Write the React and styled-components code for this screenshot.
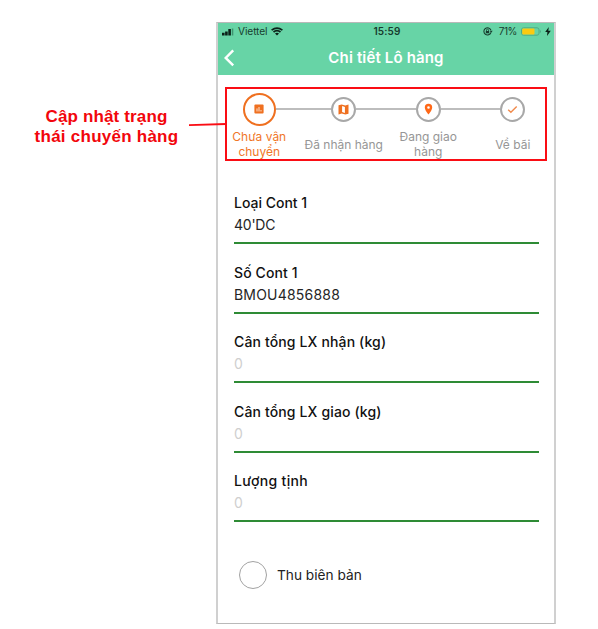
import React from "react";
import styled, { createGlobalStyle } from "styled-components";

const GlobalStyle = createGlobalStyle`
  * { box-sizing: border-box; }
  body { margin: 0; background: #fff; }
`;

const Page = styled.div`
  display: flex;
  width: 598px;
  height: 629px;
  padding-top: 22px;
  background: #fff;
  font-family: Inter, "Liberation Sans", sans-serif;
`;

const Annotation = styled.aside`
  position: relative;
  width: 216px;
  padding: 85px 3px 0 0;
  color: #f2060c;
  font: bold 17px/20px "Liberation Sans", Arial, sans-serif;
  text-align: center;
  white-space: nowrap;
`;

const AnnotationLine = styled.div`
  letter-spacing: ${(p) => p.$spacing || 0}px;
`;

const Connector = styled.svg`
  position: absolute;
  left: 188px;
  top: 98px;
  z-index: 2;
`;

const Phone = styled.main`
  width: 340px;
  height: 602px;
  border: 1px solid #b9b9b9;
  border-left: 2px solid #d0d0d0;
  border-right: 2px solid #d0d0d0;
  background: #fff;
`;

const Header = styled.header`
  height: 52px;
  background: #67d4a6;
`;

const StatusBar = styled.div`
  display: grid;
  grid-template-columns: 1fr auto 1fr;
  align-items: center;
  height: 17px;
  padding: 0 3px 0 4px;
  color: #173d2e;
  font-size: 10.2px;
  line-height: 17px;
`;

const StatusGroup = styled.div`
  display: flex;
  align-items: center;
  justify-content: ${(p) => (p.$end ? "flex-end" : "flex-start")};
  gap: ${(p) => p.$gap}px;
`;

const Carrier = styled.span`
  padding-right: 1px;
  letter-spacing: -0.1px;
`;

const BatteryLevel = styled.span`
  margin-left: 2px;
  font-size: 10px;
  letter-spacing: -0.4px;
`;

const Clock = styled.span`
  padding-left: 1px;
  font-size: 10px;
  font-weight: 600;
  letter-spacing: 0.15px;
`;

const NavBar = styled.div`
  display: grid;
  grid-template-columns: 24px 1fr 28px;
  align-items: center;
  height: 35px;
  padding-left: 4px;
`;

const Title = styled.h1`
  margin: 0;
  color: #fff;
  font-size: 15px;
  font-weight: 600;
  line-height: 35px;
  letter-spacing: 0.15px;
  text-align: center;
`;

const StepperFrame = styled.section`
  width: 322px;
  height: 74px;
  margin: 12px 0 0 7px;
  border: 2px solid #fa0d14;
`;

const Steps = styled.ol`
  display: flex;
  width: 338px;
  margin: 2px 0 0 -10px;
  padding: 0;
  list-style: none;
`;

const Step = styled.li`
  display: flex;
  flex-direction: column;
  align-items: center;
  width: 84.5px;
  color: ${(p) => (p.$active ? "#f07628" : "#969696")};
`;

const Track = styled.div`
  display: flex;
  align-items: center;
  width: 100%;
  height: 36px;
`;

const Rail = styled.span`
  flex: 1;
  height: 2px;
  background: ${(p) => (p.$hidden ? "transparent" : "#bdbdbd")};
`;

const Disc = styled.span`
  display: flex;
  align-items: center;
  justify-content: center;
  width: ${(p) => (p.$active ? 33 : 25)}px;
  height: ${(p) => (p.$active ? 33 : 25)}px;
  border: 2px solid ${(p) => (p.$active ? "#ef7020" : "#a8a8a8")};
  border-radius: 50%;
  background: #fff;
`;

const StepLabel = styled.span`
  display: flex;
  flex-direction: column;
  justify-content: center;
  height: 32px;
  margin-top: 1px;
  font-size: 12px;
  line-height: 15px;
  text-align: center;
  white-space: nowrap;
`;

const Form = styled.form`
  padding: 31px 16px 0;
`;

const Field = styled.label`
  display: block;
  width: 304.5px;
  height: 69.6px;
`;

const FieldName = styled.span`
  display: block;
  height: 22px;
  color: #111;
  font-size: 14px;
  font-weight: 500;
  line-height: 22px;
  letter-spacing: ${(p) => p.$spacing || 0}px;
`;

const FieldValue = styled.span`
  display: block;
  height: 30px;
  border-bottom: 2px solid #2e8b35;
  color: ${(p) => (p.$empty ? "#cfcfcf" : "#252525")};
  font-size: 14px;
  line-height: 22px;
  letter-spacing: ${(p) => p.$spacing || 0}px;
`;

const CheckRow = styled.div`
  display: flex;
  align-items: center;
  gap: 10px;
  height: 28px;
  margin-top: 21px;
  padding-left: 5px;
  color: #222;
  font-size: 13.7px;
`;

const RadioRing = styled.span`
  width: 28px;
  height: 28px;
  border: 1.5px solid #a2a2a2;
  border-radius: 50%;
`;

const Signal = () => (
  <svg width="13" height="8" viewBox="0 0 13 8">
    <path d="M0 4.8h2.6v2.7H0zM3.1 3.5h2.6v4H3.1zM6.3 1h2.6v6.5H6.3z" fill="#0b2118" />
    <path d="M9.8 .5h1.5v7H9.8z" fill="#3f9470" />
  </svg>
);

const Wifi = () => (
  <svg width="12" height="9" viewBox="0 0 12 9" fill="none" stroke="#0b2118">
    <path d="M.6 3.2Q6-1 11.4 3.2M2.5 5Q6 2.3 9.5 5" strokeWidth="1.7" />
    <path d="M4 6.5Q6 5 8 6.5L6 8.5z" fill="#0b2118" stroke="none" />
  </svg>
);

const RotationLock = () => (
  <svg width="10" height="9" viewBox="0 0 10 9" fill="none" stroke="#173d2e">
    <path d="M7.9 5.5A3.6 3.6 0 1 1 7.9 3.2" strokeWidth="1.1" />
    <path d="M6.7 3.8h3L8.2 5.7z" fill="#173d2e" stroke="none" />
    <path d="M2.8 4h3.4v2.3H2.8z" fill="#173d2e" stroke="none" />
    <path d="M3.5 4V3.1a1 1 0 0 1 2 0V4" strokeWidth=".8" />
  </svg>
);

const Battery = () => (
  <svg width="20" height="9" viewBox="0 0 20 9">
    <rect x=".5" y=".8" width="17.5" height="7.4" rx="2" fill="none" stroke="#4eac86" />
    <rect x="1.2" y="1.4" width="12.3" height="6.2" rx="1" fill="#fbca10" />
    <path d="M18.8 3v3q1.2-.4 1.2-1.5T18.8 3" fill="#4eac86" />
  </svg>
);

const Bolt = () => (
  <svg width="6" height="9" viewBox="0 0 6 9">
    <path d="M3.8 0 .2 5h2.2L2 9l3.8-5.2H3.3z" fill="#0b2118" />
  </svg>
);

const Back = () => (
  <svg width="14" height="20" viewBox="0 0 14 20" fill="none">
    <path d="M11.2 2.4 3.7 9.9l7.5 7.5" stroke="#fff" strokeWidth="2.4" />
  </svg>
);

const icons = {
  chart: (
    <svg width="10" height="10" viewBox="0 0 10 10">
      <rect x=".4" y=".5" width="9.2" height="9" rx="1" fill="#ef7020" />
      <path d="M3 4.4v3.1M5 3v4.5M7 6v1.5" stroke="#fff" strokeWidth=".8" />
    </svg>
  ),
  map: (
    <svg width="11" height="11" viewBox="0 0 11 11">
      <path d="M.5 1.2 3.7.5l3.6 1 3.2-1v9.3l-3.2.7-3.6-1-3.2 1z" fill="#ef7020" />
      <path d="M4.1 2.1 6.9 3v6L4.1 8z" fill="#fff" />
    </svg>
  ),
  pin: (
    <svg width="9" height="12" viewBox="0 0 9 12">
      <path d="M4.5.8a3.7 3.7 0 0 0-3.7 3.7C.8 7.3 4.5 11.4 4.5 11.4S8.2 7.3 8.2 4.5A3.7 3.7 0 0 0 4.5.8zm0 2.4a1.3 1.3 0 1 1 0 2.6 1.3 1.3 0 0 1 0-2.6z" fill="#ff6817" />
    </svg>
  ),
  check: (
    <svg width="11" height="9" viewBox="0 0 11 9" fill="none">
      <path d="M1.2 4.7 3.9 7.3 9.7 1.6" stroke="#f18a4b" strokeWidth="1.4" />
    </svg>
  ),
};

const steps = [
  { icon: "chart", lines: ["Chưa vận", "chuyển"], active: true },
  { icon: "map", lines: ["Đã nhận hàng"] },
  { icon: "pin", lines: ["Đang giao", "hàng"] },
  { icon: "check", lines: ["Về bãi"] },
];

const fields = [
  { name: "Loại Cont 1", value: "40'DC", valueSpacing: -0.25 },
  { name: "Số Cont 1", nameSpacing: 0.1, value: "BMOU4856888", valueSpacing: 0.2 },
  { name: "Cân tổng LX nhận (kg)", nameSpacing: 0.14, value: "0", empty: true },
  { name: "Cân tổng LX giao (kg)", nameSpacing: 0.14, value: "0", empty: true },
  { name: "Lượng tịnh", nameSpacing: 0.35, value: "0", empty: true },
];

export default function App() {
  return (
    <Page>
      <GlobalStyle />
      <Annotation>
        <AnnotationLine $spacing={0.15}>Cập nhật trạng</AnnotationLine>
        <AnnotationLine $spacing={0.25}>thái chuyến hàng</AnnotationLine>
        <Connector width="39" height="10" viewBox="0 0 39 10">
          <path d="M1 5.2 38 4" stroke="#fa0d14" strokeWidth="1.8" />
        </Connector>
      </Annotation>
      <Phone>
        <Header>
          <StatusBar>
            <StatusGroup $gap={3}>
              <Signal />
              <Carrier>Viettel</Carrier>
              <Wifi />
            </StatusGroup>
            <Clock>15:59</Clock>
            <StatusGroup $end $gap={4}>
              <RotationLock />
              <BatteryLevel>71%</BatteryLevel>
              <Battery />
              <Bolt />
            </StatusGroup>
          </StatusBar>
          <NavBar>
            <Back />
            <Title>Chi tiết Lô hàng</Title>
          </NavBar>
        </Header>
        <StepperFrame>
          <Steps>
            {steps.map((s, i) => (
              <Step key={s.icon} $active={s.active}>
                <Track>
                  <Rail $hidden={i === 0} />
                  <Disc $active={s.active}>{icons[s.icon]}</Disc>
                  <Rail $hidden={i === steps.length - 1} />
                </Track>
                <StepLabel>
                  {s.lines.map((line) => (
                    <span key={line}>{line}</span>
                  ))}
                </StepLabel>
              </Step>
            ))}
          </Steps>
        </StepperFrame>
        <Form>
          {fields.map((f) => (
            <Field key={f.name}>
              <FieldName $spacing={f.nameSpacing}>{f.name}</FieldName>
              <FieldValue $empty={f.empty} $spacing={f.valueSpacing}>
                {f.value}
              </FieldValue>
            </Field>
          ))}
          <CheckRow>
            <RadioRing />
            <span>Thu biên bản</span>
          </CheckRow>
        </Form>
      </Phone>
    </Page>
  );
}
